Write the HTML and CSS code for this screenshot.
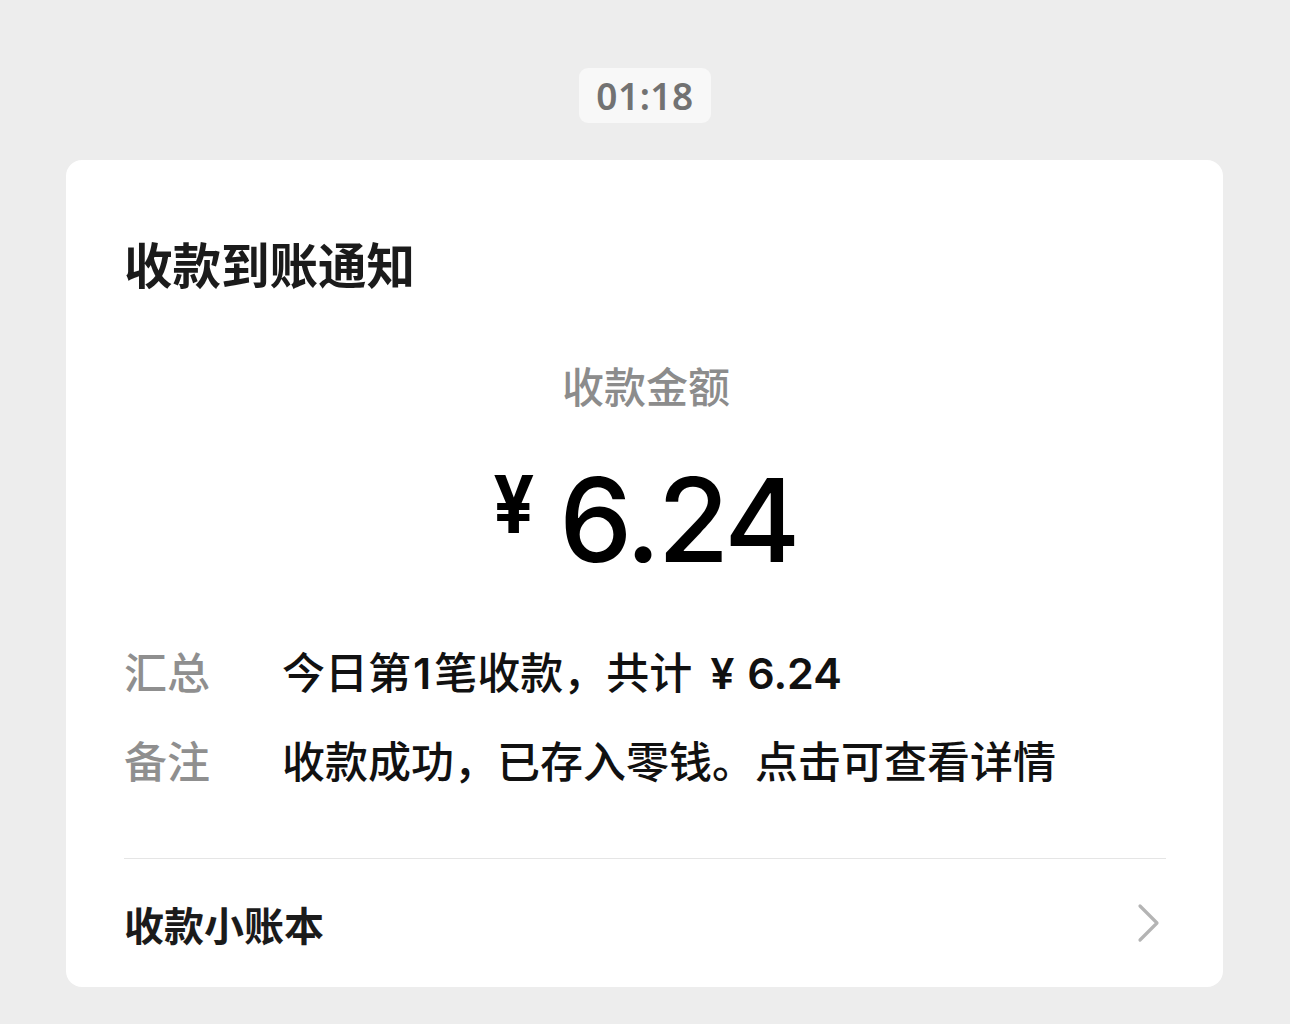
FILE: index.html
```html
<!DOCTYPE html>
<html lang="zh-CN">
<head>
<meta charset="utf-8">
<title>收款到账通知</title>
<link rel="stylesheet" href="styles.css">
</head>
<body>
<div class="time-wrap"><span class="time">01:18</span></div>
<div class="card">
  <div class="title">收款到账通知</div>
  <div class="amount-label">收款金额</div>
  <div class="amount"><span class="yen">¥</span><span class="num">6.24</span></div>
  <div class="rows">
    <div class="row"><span class="label">汇总</span><span class="value">今日第<span class="latin one">1</span>笔收款，共计<span class="latin total">¥ 6.24</span></span></div>
    <div class="row"><span class="label">备注</span><span class="value">收款成功，已存入零钱。点击可查看详情</span></div>
  </div>
  <div class="footer">
    <span class="footer-text">收款小账本</span>
    <svg class="chev" width="26" height="42" viewBox="0 0 26 42"><path d="M4 4 L21 21 L4 38" fill="none" stroke="#b4b4b4" stroke-width="3.2" stroke-linecap="round" stroke-linejoin="round"/></svg>
  </div>
</div>
</body>
</html>
```
FILE: styles.css
```css
html, body {
  margin: 0;
  padding: 0;
}
body {
  background: #ededed;
  font-family: "Noto Sans CJK SC", "Noto Sans", sans-serif;
  width: 1290px;
  height: 1024px;
  overflow: hidden;
}
.time-wrap {
  display: flex;
  justify-content: center;
  padding-top: 68px;
}
.time {
  display: block;
  width: 132px;
  height: 55px;
  box-sizing: border-box;
  background: #f8f8f8;
  border-radius: 9px;
  color: #727272;
  font-family: "Noto Sans", sans-serif;
  font-size: 37px;
  font-weight: 600;
  line-height: 55px;
  text-align: center;
  letter-spacing: 0.5px;
}
.card {
  margin: 37px 67px 0 66px;
  background: #fff;
  border-radius: 16px;
  padding: 79px 57px 0 58px;
  height: 827px;
  box-sizing: border-box;
}
.title {
  font-size: 48.5px;
  line-height: 49px;
  font-weight: 700;
  color: #1b1b1b;
}
.amount-label {
  margin-top: 76px;
  text-align: center;
  font-size: 42px;
  line-height: 42px;
  color: #8c8c8c;
  font-weight: 500;
  padding-left: 2px;
}
.amount {
  display: flex;
  justify-content: center;
  align-items: flex-start;
  margin-top: 56px;
  color: #000;
  padding-right: 2px;
  height: 116px;
}
.yen {
  font-family: "Inter", sans-serif;
  font-weight: 700;
  font-size: 80px;
  line-height: 80px;
  margin-top: 2px;
  margin-right: 23px;
  transform: scaleX(0.9);
}
.num {
  font-family: "Inter", sans-serif;
  font-size: 116px;
  line-height: 116px;
  font-weight: 500;
  letter-spacing: -3px;
}
.rows {
  margin-top: 71px;
  display: flex;
  flex-direction: column;
  gap: 43px;
}
.row {
  display: flex;
  font-size: 43px;
  line-height: 43px;
}
.label {
  width: 158px;
  flex: none;
  color: #8f8f8f;
  font-weight: 500;
}
.value {
  color: #111;
  font-weight: 500;
}
.latin {
  font-family: "Inter", sans-serif;
  font-weight: 600;
}
.one {
  margin: 0 3px 0 2px;
}
.total {
  margin-left: 18px;
  word-spacing: 2px;
}
.footer {
  margin-top: 77px;
  border-top: 1px solid #e5e5e5;
  height: 130px;
  display: flex;
  align-items: center;
  justify-content: space-between;
}
.footer-text {
  font-size: 40px;
  line-height: 40px;
  font-weight: 700;
  color: #1b1b1b;
}
.chev {
  margin-right: 4px;
  margin-bottom: 2px;
}
```
